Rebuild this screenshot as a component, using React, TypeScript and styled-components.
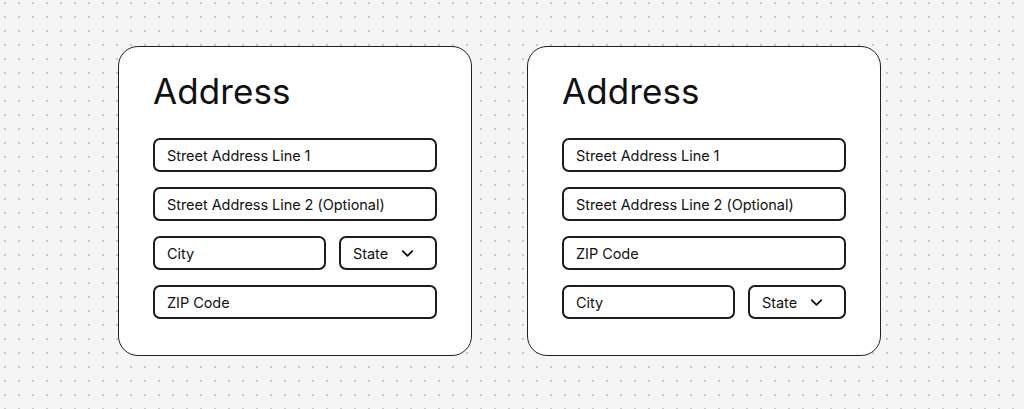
import React from "react";
import styled, { createGlobalStyle } from "styled-components";
import { ChevronDown } from "lucide-react";

const Global = createGlobalStyle`
  html, body { margin: 0; padding: 0; }
  body {
    width: 1024px;
    height: 409px;
    overflow: hidden;
    background-color: #f5f5f5;
    background-image: radial-gradient(circle, #c9c9c9 0.9px, transparent 1.3px);
    background-size: 14px 14px;
    background-position: -2px -4px;
    font-family: Inter, "Noto Sans", sans-serif;
    color: #111;
  }
`;

const Page = styled.div`
  display: flex;
  gap: 55px;
  padding: 46px 0 0 118px;
`;

const Card = styled.section`
  box-sizing: border-box;
  width: 354px;
  height: 310px;
  background: #fff;
  border: 1px solid #222;
  border-radius: 20px;
  padding: 23px 34px 0 34px;
  display: flex;
  flex-direction: column;
`;

const Title = styled.h1`
  margin: 0 0 26px 0;
  font-size: 35px;
  font-weight: 400;
  line-height: 42px;
  letter-spacing: 0.1px;
`;

const Fields = styled.div`
  display: flex;
  flex-direction: column;
  gap: 15px;
`;

const Row = styled.div`
  display: flex;
  gap: 13px;
`;

const Field = styled.div<{ $width?: number; $grow?: boolean }>`
  box-sizing: border-box;
  height: 34px;
  flex: ${(p) => (p.$grow ? "1 1 0" : "none")};
  ${(p) => (p.$width ? `width: ${p.$width}px;` : "")}
  border: 2px solid #1c1c1c;
  border-radius: 7px;
  display: flex;
  align-items: center;
  padding: 0 12px;
  font-size: 14.5px;
  letter-spacing: -0.05px;
  gap: 10px;
`;

const Chevron = styled(ChevronDown)`
  width: 19px;
  height: 19px;
  stroke-width: 2.3;
`;

const StateSelect = () => (
  <Field $width={98}>
    State
    <Chevron />
  </Field>
);

const CityRow = () => (
  <Row>
    <Field $grow>City</Field>
    <StateSelect />
  </Row>
);

export default function App() {
  return (
    <>
      <Global />
      <Page>
        <Card>
          <Title>Address</Title>
          <Fields>
            <Field>Street Address Line 1</Field>
            <Field>Street Address Line 2 (Optional)</Field>
            <CityRow />
            <Field>ZIP Code</Field>
          </Fields>
        </Card>
        <Card>
          <Title>Address</Title>
          <Fields>
            <Field>Street Address Line 1</Field>
            <Field>Street Address Line 2 (Optional)</Field>
            <Field>ZIP Code</Field>
            <CityRow />
          </Fields>
        </Card>
      </Page>
    </>
  );
}
